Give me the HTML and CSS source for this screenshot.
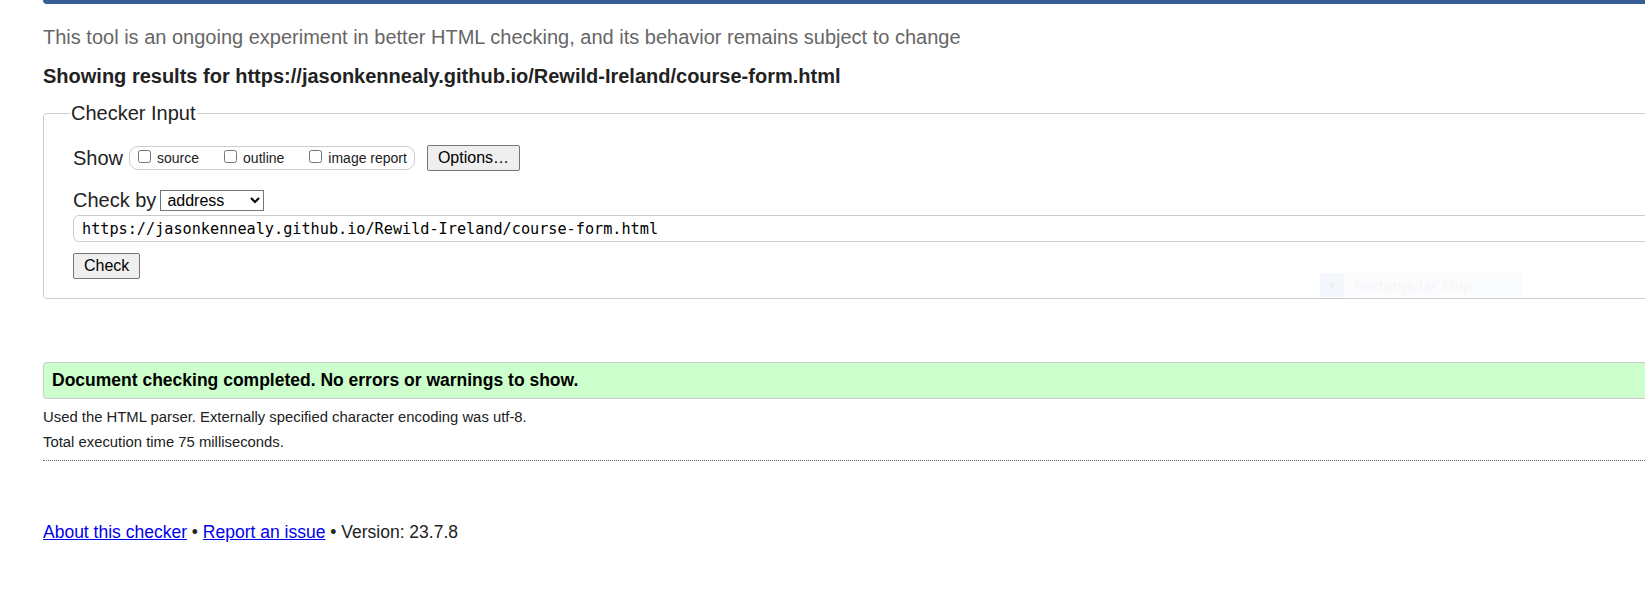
FILE: index.html
```html
<!DOCTYPE html>
<html lang="en">
<head>
<meta charset="utf-8">
<title>Nu Html Checker</title>
<link rel="stylesheet" href="styles.css">
</head>
<body>
<div class="page">
  <div class="topbar"></div>
  <p class="intro">This tool is an ongoing experiment in better HTML checking, and its behavior remains subject to change</p>
  <p class="showing">Showing results for https://jasonkennealy.github.io/Rewild-Ireland/course-form.html</p>
  <form class="checker">
    <fieldset class="checker-set">
      <legend class="checker-legend">Checker Input</legend>
      <div class="row row-show">
        <span class="row-label">Show</span>
        <span class="pill">
          <label class="opt"><input type="checkbox" class="cb">source</label>
          <label class="opt"><input type="checkbox" class="cb">outline</label>
          <label class="opt"><input type="checkbox" class="cb">image report</label>
        </span>
        <button type="button" class="btn btn-options">Options…</button>
      </div>
      <div class="row row-by">
        <span class="row-label">Check by</span>
        <select class="sel"><option>address</option></select>
      </div>
      <input class="url" type="text" value="https://jasonkennealy.github.io/Rewild-Ireland/course-form.html">
      <div class="row row-submit">
        <button type="button" class="btn btn-check">Check</button>
      </div>
    </fieldset>
  </form>
  <div class="snip"><span class="snip-icon"><span class="snip-dot"></span></span><span class="snip-text">Rectangular Snip</span></div>
  <div class="success">Document checking completed. No errors or warnings to show.</div>
  <p class="details">Used the HTML parser. Externally specified character encoding was utf-8.</p>
  <p class="details">Total execution time 75 milliseconds.</p>
  <hr class="dotted">
  <p class="footer"><a href="#">About this checker</a> • <a href="#">Report an issue</a> • Version: 23.7.8</p>
</div>
</body>
</html>
```
FILE: styles.css
```css
html, body {
  margin: 0;
  padding: 0;
  overflow: hidden;
  background: #fff;
}
body {
  font-family: "Liberation Sans", Arial, sans-serif;
  color: #222;
}
.page {
  position: relative;
  margin-left: 43px;
  margin-right: -60px;
}
.topbar {
  height: 4px;
  background: #365d95;
  border-bottom-left-radius: 4px;
}
.intro {
  margin: 22px 0 0;
  font-size: 20px;
  line-height: 23px;
  color: #666;
}
.showing {
  margin: 16px 0 0;
  font-size: 20px;
  line-height: 23px;
  font-weight: bold;
  color: #222;
}
.checker {
  margin: 14px 0 0;
}
.checker-set {
  margin: 0;
  border: 1px solid #ccc;
  border-radius: 4px;
  padding: 20px 0 19px 29px;
  display: flex;
  flex-direction: column;
  align-items: flex-start;
}
.checker-legend {
  font-size: 20px;
  line-height: 23px;
  padding: 0 1px;
  margin-left: -3px;
  color: #222;
}
.row {
  display: flex;
  align-items: center;
}
.row-label {
  font-size: 20px;
  line-height: 23px;
  color: #222;
}
.row-show {
  height: 26px;
}
.pill {
  display: flex;
  align-items: baseline;
  gap: 25px;
  margin-left: 6px;
  height: 22px;
  padding: 0 7px 0 8px;
  border: 1px solid #ccc;
  border-radius: 9px;
  font-size: 14px;
  line-height: 22px;
  color: #222;
}
.opt {
  display: flex;
  align-items: center;
  gap: 6px;
}
.cb {
  margin: 0;
  width: 13px;
  height: 13px;
  position: relative;
  top: -2px;
}
.btn {
  font-family: "Liberation Sans", Arial, sans-serif;
  font-size: 16px;
  color: #000;
  background: #efefef;
  border: 1px solid #767676;
  border-radius: 2px;
  height: 26px;
  padding: 0 10px;
}
.btn-options {
  margin-left: 12px;
}
.row-by {
  margin-top: 18px;
  height: 23px;
}
.sel {
  margin-left: 4px;
  font-family: "Liberation Sans", Arial, sans-serif;
  font-size: 16px;
  height: 21px;
  width: 104px;
  border: 1px solid #767676;
  border-radius: 0;
  background: #fff;
  color: #000;
  padding: 0 2px;
}
.url {
  margin-top: 3px;
  box-sizing: border-box;
  width: 1600px;
  height: 27px;
  border: 1px solid #ccc;
  border-radius: 6px;
  padding: 0 8px;
  font-family: "DejaVu Sans Mono", "Liberation Mono", monospace;
  font-size: 15.2px;
  color: #000;
}
.row-submit {
  margin-top: 11px;
}
.btn-check {
  padding: 0 10px;
}
.snip {
  position: absolute;
  left: 1277px;
  top: 273px;
  width: 202px;
  height: 24px;
  display: flex;
  align-items: center;
  background: #fbfcfe;
}
.snip-icon {
  width: 24px;
  height: 24px;
  background: #f4f8fd;
  display: flex;
  align-items: center;
  justify-content: center;
}
.snip-dot {
  width: 6px;
  height: 6px;
  border-radius: 50%;
  background: #eeeff1;
}
.snip-text {
  margin-left: 10px;
  font-family: "Open Sans", sans-serif;
  font-size: 15px;
  color: #f5f6f7;
}
.success {
  margin-top: 63px;
  height: 35px;
  line-height: 35px;
  border: 1px solid #ccc;
  border-right: 0;
  border-radius: 4px 0 0 4px;
  background: #ccffcc;
  padding-left: 8px;
  font-size: 17.5px;
  font-weight: bold;
  color: #000;
}
.details {
  margin: 0;
  font-size: 14.85px;
  line-height: 25px;
  color: #222;
}
.success + .details {
  margin-top: 6px;
}
.dotted {
  margin: 5px 0 0;
  border: 0;
  border-top: 1px dotted #666;
  height: 0;
}
.footer {
  margin: 61px 0 0;
  font-size: 17.5px;
  line-height: 21px;
  color: #222;
}
.footer a {
  color: #0000ee;
}
```
